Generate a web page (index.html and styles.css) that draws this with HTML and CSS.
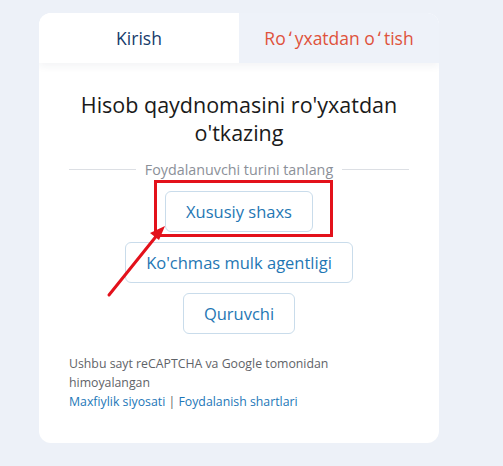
FILE: index.html
```html
<!DOCTYPE html>
<html lang="uz">
<head>
<meta charset="utf-8">
<title>Ro'yxatdan o'tish</title>
<link rel="stylesheet" href="styles.css">
</head>
<body>
<div class="card">
  <div class="tabs">
    <div class="tab tab-active">Kirish</div>
    <div class="tab tab-other">Ro<span class="okina">ʻ</span>yxatdan o<span class="okina">ʻ</span>tish</div>
  </div>
  <div class="content">
    <h1 class="title">Hisob qaydnomasini ro'yxatdan o'tkazing</h1>
    <div class="divider"><span class="divider-line"></span><span class="divider-text">Foydalanuvchi turini tanlang</span><span class="divider-line"></span></div>
    <div class="choices">
      <button class="choice">Xususiy shaxs</button>
      <button class="choice">Ko'chmas mulk agentligi</button>
      <button class="choice">Quruvchi</button>
    </div>
    <div class="footer">
      <p class="note">Ushbu sayt reCAPTCHA va Google tomonidan himoyalangan</p>
      <p class="links"><a href="#">Maxfiylik siyosati</a> | <a href="#">Foydalanish shartlari</a></p>
    </div>
  </div>
</div>
<svg class="annotation" width="503" height="466" viewBox="0 0 503 466">
  <rect x="155.5" y="181.5" width="176" height="54" fill="none" stroke="#e3111b" stroke-width="3"/>
  <line x1="109" y1="295" x2="158" y2="234" stroke="#e3111b" stroke-width="3" stroke-linecap="round"/>
  <polygon points="165,226 150,233 159,240" fill="#e3111b"/>
</svg>
</body>
</html>
```
FILE: styles.css
```css
* { box-sizing: border-box; }
html, body { margin: 0; padding: 0; }
body {
  width: 503px;
  height: 466px;
  background: #edf1f8;
  font-family: "Open Sans", "Noto Sans", sans-serif;
  position: relative;
  overflow: hidden;
  padding: 13px 0 0 39px;
}
.card {
  width: 400px;
  height: 430px;
  background: #fff;
  border-radius: 12px;
  overflow: hidden;
}
.tabs {
  display: grid;
  grid-template-columns: 200px 200px;
  height: 50px;
  box-shadow: 0 3px 8px rgba(30, 50, 90, 0.06);
  position: relative;
}
.tab {
  display: flex;
  align-items: center;
  justify-content: center;
  font-size: 17.5px;
}
.okina { margin: 0 3px 0 3px; }
.tab-active { background: #fff; color: #163b6b; }
.tab-other { background: #eef2f9; color: #df533c; }
.content {
  padding: 28px 30px 0;
  display: flex;
  flex-direction: column;
}
.title {
  margin: 0 auto;
  width: 340px;
  text-align: center;
  font-size: 21.5px;
  line-height: 28px;
  font-weight: 500;
  color: #1a1a1a;
}
.divider {
  display: flex;
  align-items: center;
  gap: 9px;
  margin-top: 12px;
  height: 20px;
}
.divider-line {
  flex: 1;
  height: 1px;
  background: #dcdfe4;
}
.divider-text {
  font-size: 14.3px;
  color: #8b9099;
  white-space: nowrap;
}
.choices {
  margin-top: 12px;
  display: flex;
  flex-direction: column;
  align-items: center;
  gap: 10px;
}
.choice {
  height: 41px;
  padding: 0 20px;
  background: #fff;
  border: 1px solid #c9dceb;
  border-radius: 6px;
  font-family: inherit;
  font-size: 16.5px;
  color: #1f77b4;
}
.footer {
  margin-top: 20px;
  font-size: 12.3px;
  line-height: 19px;
  color: #5f6368;
}
.footer p { margin: 0; }
.note { width: 290px; }
.links a { color: #1d77b8; text-decoration: none; }
.annotation {
  position: absolute;
  left: 0;
  top: 0;
  pointer-events: none;
}
```
